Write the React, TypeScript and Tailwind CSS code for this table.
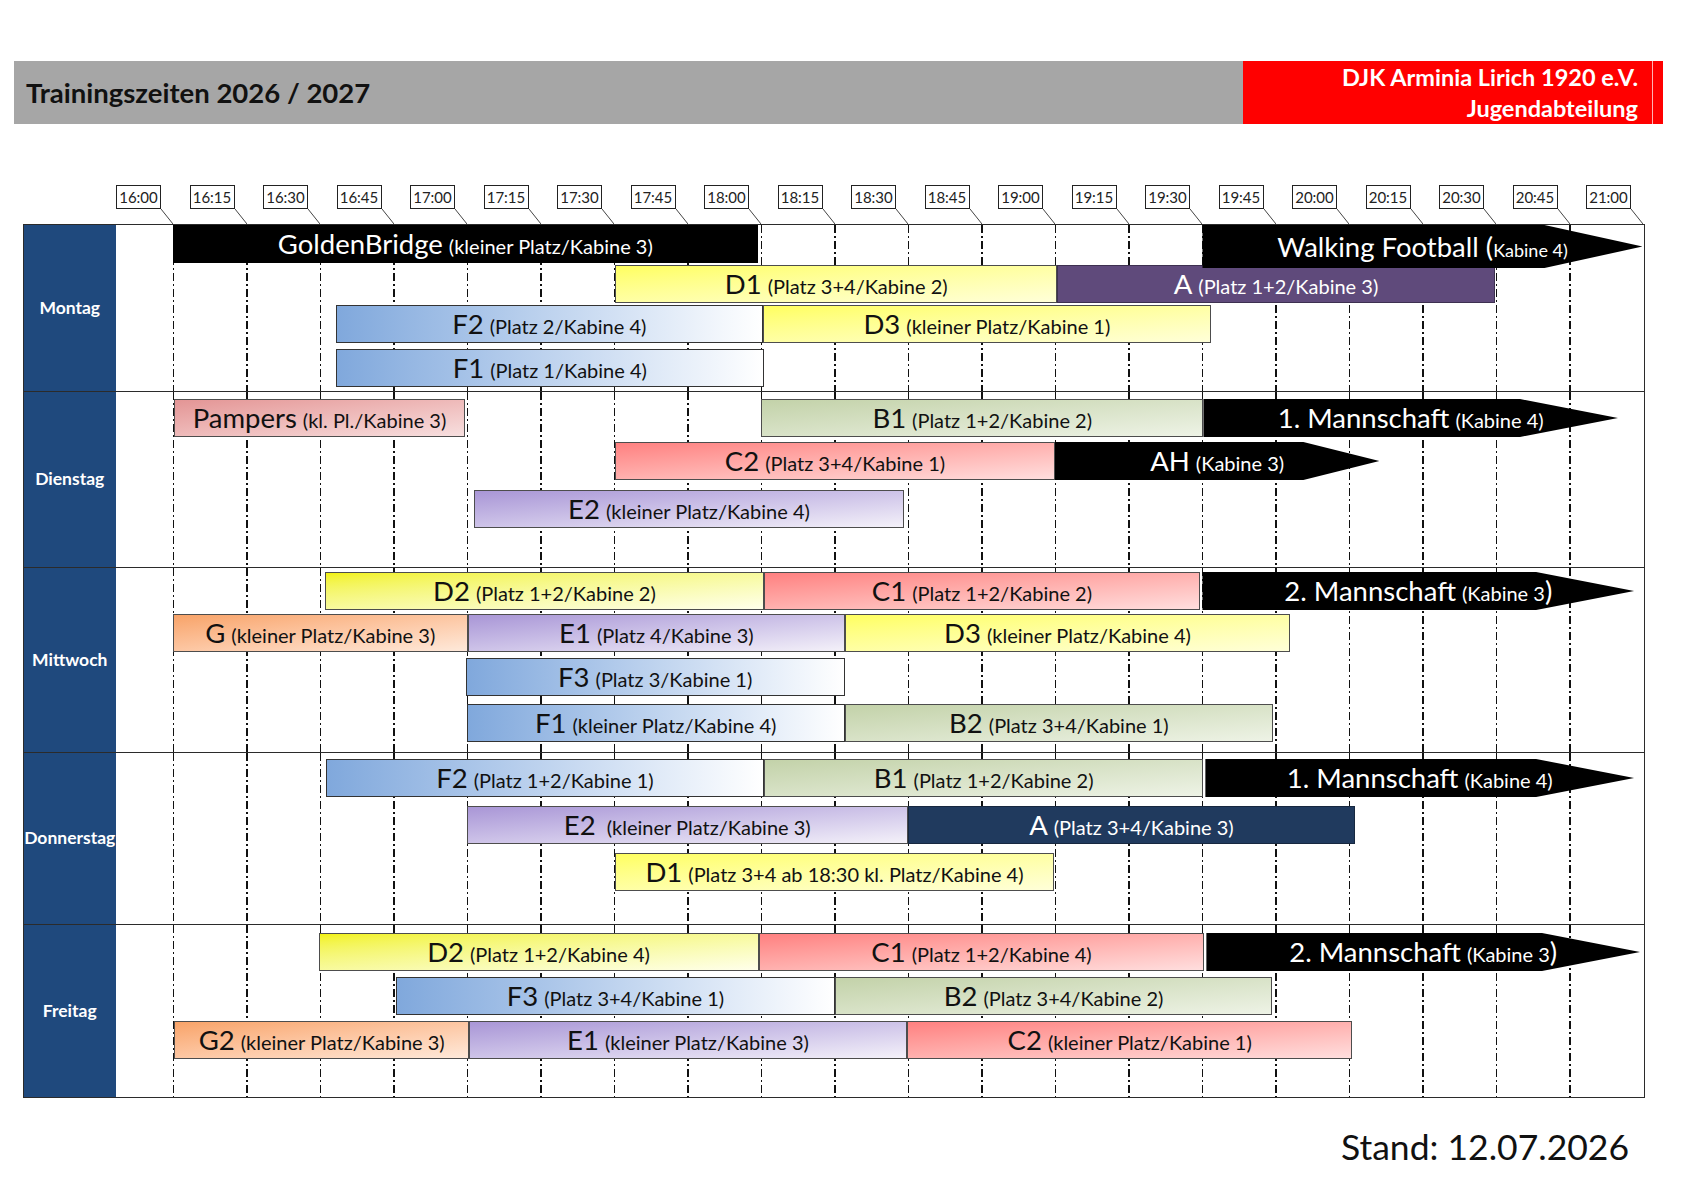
import React from 'react';

type Kind =
    | 'blackRect'
    | 'arrow'
    | 'arrowShort'
    | 'yellow'
    | 'yellowBright'
    | 'blue'
    | 'red'
    | 'green'
    | 'lavender'
    | 'orange'
    | 'pink'
    | 'plum'
    | 'navy';

type Bar = { s: number; e: number; name: string; info: string; close?: string; kind: Kind; tall?: boolean };
type Lane = { mt: string; bars: Bar[] };
type Day = { name: string; h: string; lanes: Lane[] };

// timeline: 16:00 - 21:00 => 300 minutes on 1470px
const PX = 1470 / 300;

const kindClass: Record<Kind, string> = {
    blackRect: 'bg-black text-white',
    arrow: 'bg-black text-white [clip-path:polygon(0_0,calc(100%_-_98px)_0,100%_50%,calc(100%_-_98px)_100%,0_100%)]',
    arrowShort: 'bg-black text-white [clip-path:polygon(0_0,calc(100%_-_76px)_0,100%_50%,calc(100%_-_76px)_100%,0_100%)]',
    yellow: 'border border-[#4d4d4d] bg-linear-to-br from-[#ffff5e] to-[#ffffd8] text-[#111]',
    yellowBright: 'border border-[#4d4d4d] bg-linear-to-br from-[#f2f200] to-[#ffffea] text-[#111]',
    blue: 'border border-[#333] bg-linear-to-r from-[#80a8dc] to-[#ffffff] text-[#111]',
    red: 'border border-[#4d4d4d] bg-linear-to-br from-[#ff8080] to-[#ffdede] text-[#111]',
    green: 'border border-[#4d4d4d] bg-linear-to-br from-[#c3d2a9] to-[#eef3e6] text-[#111]',
    lavender: 'border border-[#4d4d4d] bg-linear-to-br from-[#a996d6] to-[#f4f1f9] text-[#111]',
    orange: 'border border-[#4d4d4d] bg-linear-to-br from-[#f8a368] to-[#fee9da] text-[#111]',
    pink: 'border border-[#4d4d4d] bg-linear-to-br from-[#e39595] to-[#f7dfdf] text-[#111]',
    plum: 'border border-[#3d3050] bg-[#5f4a7b] text-white',
    navy: 'border border-[#17283f] bg-[#203a5e] text-white',
};

const days: Day[] = [
    {
        name: 'Montag',
        h: 'h-[166px]',
        lanes: [
            {
                mt: 'mt-0',
                bars: [
                    { s: 0, e: 119.5, name: 'GoldenBridge', info: '(kleiner Platz/Kabine 3)', kind: 'blackRect' },
                    { s: 210.2, e: 300, name: 'Walking Football (', info: 'Kabine 4)', kind: 'arrow', tall: true },
                ],
            },
            {
                mt: 'mt-[2px]',
                bars: [
                    { s: 90.3, e: 180.6, name: 'D1', info: '(Platz 3+4/Kabine 2)', kind: 'yellow' },
                    { s: 180.6, e: 269.8, name: 'A', info: '(Platz 1+2/Kabine 3)', kind: 'plum' },
                ],
            },
            {
                mt: 'mt-[2px]',
                bars: [
                    { s: 33.3, e: 120.5, name: 'F2', info: '(Platz 2/Kabine 4)', kind: 'blue' },
                    { s: 120.5, e: 211.9, name: 'D3', info: '(kleiner Platz/Kabine 1)', kind: 'yellow' },
                ],
            },
            {
                mt: 'mt-[6px]',
                bars: [{ s: 33.3, e: 120.7, name: 'F1', info: '(Platz 1/Kabine 4)', kind: 'blue' }],
            },
        ],
    },
    {
        name: 'Dienstag',
        h: 'h-[176px]',
        lanes: [
            {
                mt: 'mt-[7px]',
                bars: [
                    { s: 0.4, e: 59.6, name: 'Pampers', info: '(kl. Pl./Kabine 3)', kind: 'pink' },
                    { s: 120.1, e: 210.4, name: 'B1', info: '(Platz 1+2/Kabine 2)', kind: 'green' },
                    { s: 210.4, e: 295, name: '1. Mannschaft', info: '(Kabine 4)', kind: 'arrow' },
                ],
            },
            {
                mt: 'mt-[5px]',
                bars: [
                    { s: 90.3, e: 180.1, name: 'C2', info: '(Platz 3+4/Kabine 1)', kind: 'red' },
                    { s: 180.1, e: 246.3, name: 'AH', info: '(Kabine 3)', kind: 'arrowShort' },
                ],
            },
            {
                mt: 'mt-[10px]',
                bars: [{ s: 61.6, e: 149.2, name: 'E2', info: '(kleiner Platz/Kabine 4)', kind: 'lavender' }],
            },
        ],
    },
    {
        name: 'Mittwoch',
        h: 'h-[185px]',
        lanes: [
            {
                mt: 'mt-[4px]',
                bars: [
                    { s: 31.1, e: 120.7, name: 'D2', info: '(Platz 1+2/Kabine 2)', kind: 'yellowBright' },
                    { s: 120.7, e: 209.7, name: 'C1', info: '(Platz 1+2/Kabine 2)', kind: 'red' },
                    { s: 210.2, e: 298.3, name: '2. Mannschaft', info: '(Kabine 3', close: ')', kind: 'arrow' },
                ],
            },
            {
                mt: 'mt-[4px]',
                bars: [
                    { s: 0, e: 60.3, name: 'G', info: '(kleiner Platz/Kabine 3)', kind: 'orange' },
                    { s: 60.3, e: 137.2, name: 'E1', info: '(Platz 4/Kabine 3)', kind: 'lavender' },
                    { s: 137.2, e: 228.1, name: 'D3', info: '(kleiner Platz/Kabine 4)', kind: 'yellow' },
                ],
            },
            {
                mt: 'mt-[6px]',
                bars: [{ s: 59.8, e: 137.2, name: 'F3', info: '(Platz 3/Kabine 1)', kind: 'blue' }],
            },
            {
                mt: 'mt-[8px]',
                bars: [
                    { s: 60, e: 137.2, name: 'F1', info: '(kleiner Platz/Kabine 4)', kind: 'blue' },
                    { s: 137.2, e: 224.6, name: 'B2', info: '(Platz 3+4/Kabine 1)', kind: 'green' },
                ],
            },
        ],
    },
    {
        name: 'Donnerstag',
        h: 'h-[172px]',
        lanes: [
            {
                mt: 'mt-[6px]',
                bars: [
                    { s: 31.3, e: 120.7, name: 'F2', info: '(Platz 1+2/Kabine 1)', kind: 'blue' },
                    { s: 120.7, e: 210.4, name: 'B1', info: '(Platz 1+2/Kabine 2)', kind: 'green' },
                    { s: 210.8, e: 298.3, name: '1. Mannschaft', info: '(Kabine 4)', kind: 'arrow' },
                ],
            },
            {
                mt: 'mt-[9px]',
                bars: [
                    { s: 60, e: 150.1, name: 'E2', info: ' (kleiner Platz/Kabine 3)', kind: 'lavender' },
                    { s: 150.1, e: 241.3, name: 'A', info: '(Platz 3+4/Kabine 3)', kind: 'navy' },
                ],
            },
            {
                mt: 'mt-[9px]',
                bars: [{ s: 90.3, e: 179.9, name: 'D1', info: '(Platz 3+4 ab 18:30 kl. Platz/Kabine 4)', kind: 'yellow' }],
            },
        ],
    },
    {
        name: 'Freitag',
        h: 'h-[173px]',
        lanes: [
            {
                mt: 'mt-[8px]',
                bars: [
                    { s: 29.8, e: 119.6, name: 'D2', info: '(Platz 1+2/Kabine 4)', kind: 'yellowBright' },
                    { s: 119.6, e: 210.6, name: 'C1', info: '(Platz 1+2/Kabine 4)', kind: 'red' },
                    { s: 211, e: 299.5, name: '2. Mannschaft', info: '(Kabine 3', close: ')', kind: 'arrow' },
                ],
            },
            {
                mt: 'mt-[6px]',
                bars: [
                    { s: 45.6, e: 135.2, name: 'F3', info: '(Platz 3+4/Kabine 1)', kind: 'blue' },
                    { s: 135.2, e: 224.4, name: 'B2', info: '(Platz 3+4/Kabine 2)', kind: 'green' },
                ],
            },
            {
                mt: 'mt-[6px]',
                bars: [
                    { s: 0.4, e: 60.5, name: 'G2', info: '(kleiner Platz/Kabine 3)', kind: 'orange' },
                    { s: 60.5, e: 149.9, name: 'E1', info: '(kleiner Platz/Kabine 3)', kind: 'lavender' },
                    { s: 149.9, e: 240.8, name: 'C2', info: '(kleiner Platz/Kabine 1)', kind: 'red' },
                ],
            },
        ],
    },
];

const times = [
    '16:00', '16:15', '16:30', '16:45', '17:00', '17:15', '17:30', '17:45', '18:00', '18:15', '18:30',
    '18:45', '19:00', '19:15', '19:30', '19:45', '20:00', '20:15', '20:30', '20:45', '21:00',
];

function BarBox({ bar }: { bar: Bar }) {
    return (
        <div
            className={`flex shrink-0 items-center justify-center overflow-hidden whitespace-pre ${bar.tall ? 'h-[43px]' : 'h-[38px]'} ${kindClass[bar.kind]}`}
            style={{ width: (bar.e - bar.s) * PX }}
        >
            <span className="leading-none">
                <span className="text-[27.5px]">{bar.name}</span>
                <span className={bar.tall ? 'text-[18px]' : 'ml-[6px] text-[20px]'}>{bar.info}</span>
                {bar.close && <span className="text-[27.5px]">{bar.close}</span>}
            </span>
        </div>
    );
}

function LaneRow({ lane }: { lane: Lane }) {
    let cursor = 0;
    return (
        <div className={`flex h-[38px] items-start ${lane.mt}`}>
            {lane.bars.map((bar, i) => {
                const gap = Math.max(0, bar.s - cursor) * PX;
                cursor = bar.e;
                return (
                    <React.Fragment key={i}>
                        <div className="shrink-0" style={{ width: gap }} />
                        <BarBox bar={bar} />
                    </React.Fragment>
                );
            })}
        </div>
    );
}

export default function App() {
    return (
        <div className="flex h-[1190px] w-[1683px] flex-col bg-white font-['Lato','Liberation_Sans',sans-serif] text-[#111]">
            {/* Header */}
            <div className="ml-[14px] mt-[61px] flex h-[63px] w-[1649px]">
                <div className="flex flex-1 items-center bg-[#a6a6a6] pl-[12px]">
                    <span className="text-[27.5px] font-bold text-[#111]">Trainingszeiten 2026 / 2027</span>
                </div>
                <div className="flex w-[420px] bg-[#ff0000]">
                    <div className="flex flex-1 flex-col items-end justify-center pr-[14px] text-[23.5px] font-bold leading-[31px] text-white">
                        <span>DJK Arminia Lirich 1920 e.V.</span>
                        <span>Jugendabteilung</span>
                    </div>
                    <div className="w-[1px] bg-[#ffb3b3]" />
                    <div className="w-[10px]" />
                </div>
            </div>

            {/* Time labels */}
            <div className="ml-[99.5px] grid h-[100px] w-[1543.5px] grid-cols-[repeat(21,73.5px)]">
                {times.map((t) => (
                    <div key={t} className="flex flex-col items-end pt-[61px]">
                        <div className="mr-[12px] flex h-[24px] w-[45px] items-center justify-center border border-[#222] text-[15px] text-[#222]">
                            {t}
                        </div>
                        <svg className="block h-[15px] w-[12px]" viewBox="0 0 12 15">
                            <line x1="0" y1="0" x2="12" y2="15" stroke="#444" strokeWidth="1" />
                        </svg>
                    </div>
                ))}
            </div>

            {/* Schedule table */}
            <div className="ml-[23px] flex w-[1621.5px] flex-col border-[1.5px] border-[#2b2b2b]">
                {days.map((day) => (
                    <div key={day.name} className={`flex border-t-[1.5px] border-[#2b2b2b] first:border-t-0 ${day.h}`}>
                        <div className="flex w-[91.5px] shrink-0 items-center justify-center bg-[#1f497d] text-[17.5px] font-bold text-white">
                            <span className="whitespace-nowrap">{day.name}</span>
                        </div>
                        <div className="w-[57px] shrink-0" />
                        <div className="relative w-[1470px]">
                            {/* dashed quarter-hour lines */}
                            <div className="absolute inset-0 grid grid-cols-20">
                                {times.slice(0, 20).map((t) => (
                                    <div key={t} className="h-full w-[1.5px] bg-[repeating-linear-gradient(to_bottom,#111_0px,#111_8px,transparent_8px,transparent_11px,#111_11px,#111_13px,transparent_13px,transparent_16px)]" />
                                ))}
                            </div>
                            <div className="relative z-10 flex flex-col">
                                {day.lanes.map((lane, i) => (
                                    <LaneRow key={i} lane={lane} />
                                ))}
                            </div>
                        </div>
                    </div>
                ))}
            </div>

            {/* Footer */}
            <div className="mt-[29px] w-[1629px] text-right text-[35.5px] leading-[40px] text-[#111]">Stand: 12.07.2026</div>
        </div>
    );
}
